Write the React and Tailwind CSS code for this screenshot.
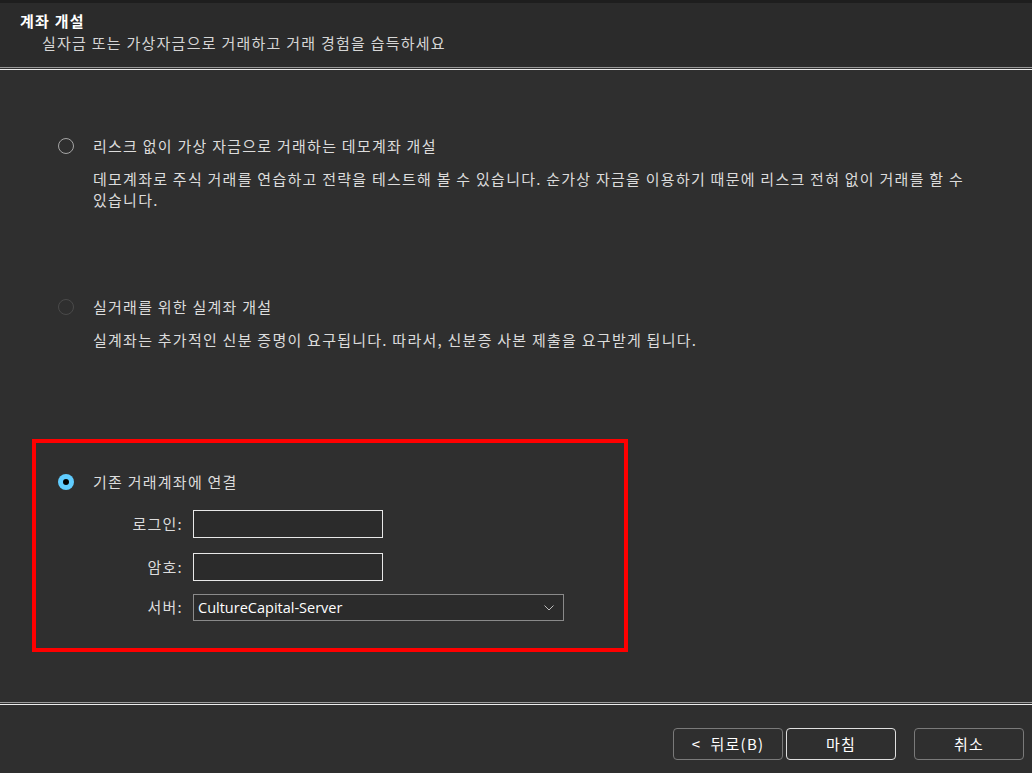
import React from "react";

const font = { fontFamily: '"Noto Sans CJK KR", "Noto Sans", sans-serif' };

function Radio({ state }) {
  if (state === "checked") {
    return (
      <div className="w-4 h-4 rounded-full bg-[#60cdff] flex items-center justify-center shrink-0">
        <div className="w-[6px] h-[6px] rounded-full bg-black" />
      </div>
    );
  }
  if (state === "disabled") {
    return <div className="w-4 h-4 rounded-full border border-[#4a4a4a] shrink-0" />;
  }
  return <div className="w-4 h-4 rounded-full border-[1.5px] border-[#a5a5a5] shrink-0" />;
}

function Separator() {
  return (
    <div className="flex flex-col">
      <div className="h-px bg-[#9a9a9a]" />
      <div className="h-px bg-transparent" />
      <div className="h-px bg-[#ededed]" />
    </div>
  );
}

export default function App() {
  return (
    <div
      className="w-[1032px] h-[773px] bg-[#2f2f2f] flex flex-col text-[15px] tracking-[1.25px] text-[#dcdcdc] overflow-hidden"
      style={font}
    >
      <div className="h-[3px] bg-[#1e1e1e]" />
      <div className="h-[64px] bg-[#2b2b2b] pl-5 pt-[8px]">
        <div className="font-bold text-white leading-5">계좌 개설</div>
        <div className="pl-[22px] leading-5 mt-[2px] text-[#d6d6d6]">
          실자금 또는 가상자금으로 거래하고 거래 경험을 습득하세요
        </div>
      </div>
      <Separator />

      <div className="flex-1 flex flex-col pt-[66px]">
        <div className="pl-[58px]">
          <div className="flex items-center h-5 gap-[19px]">
            <Radio state="unchecked" />
            <span>리스크 없이 가상 자금으로 거래하는 데모계좌 개설</span>
          </div>
          <div className="pl-[35px] mt-3 leading-[21px] w-[940px]">
            데모계좌로 주식 거래를 연습하고 전략을 테스트해 볼 수 있습니다. 순가상 자금을 이용하기 때문에 리스크 전혀 없이 거래를 할 수
            <br />
            있습니다.
          </div>
        </div>

        <div className="pl-[58px] mt-[87px]">
          <div className="flex items-center h-5 gap-[19px]">
            <Radio state="disabled" />
            <span>실거래를 위한 실계좌 개설</span>
          </div>
          <div className="pl-[35px] mt-3 leading-[21px]">
            실계좌는 추가적인 신분 증명이 요구됩니다. 따라서, 신분증 사본 제출을 요구받게 됩니다.
          </div>
        </div>

        <div className="ml-8 mt-[89px] w-[596px] h-[213px] border-4 border-[#ff0000] pl-[22px] pt-[29px]">
          <div className="flex items-center h-5 gap-[19px]">
            <Radio state="checked" />
            <span>기존 거래계좌에 연결</span>
          </div>
          <div className="flex flex-col mt-[18px]">
            <div className="flex items-center">
              <div className="w-[125px] text-right">로그인:</div>
              <div className="ml-[10px] w-[190px] h-[28px] border-[1.5px] border-[#e8e8e8] bg-[#2b2b2b]" />
            </div>
            <div className="flex items-center mt-[15px]">
              <div className="w-[125px] text-right">암호:</div>
              <div className="ml-[10px] w-[190px] h-[28px] border-[1.5px] border-[#e8e8e8] bg-[#2b2b2b]" />
            </div>
            <div className="flex items-center mt-[13px]">
              <div className="w-[125px] text-right">서버:</div>
              <div className="ml-[10px] w-[371px] h-[27px] border border-[#8a8a8a] bg-[#2b2b2b] flex items-center justify-between pl-1 pr-[9px]">
                <span
                  className="text-[14.5px] tracking-normal text-white"
                  style={{ fontFamily: '"Open Sans", "Noto Sans", sans-serif' }}
                >
                  CultureCapital-Server
                </span>
                <svg width="10" height="6" viewBox="0 0 10 6" fill="none">
                  <path d="M0.5 0.5 L5 5 L9.5 0.5" stroke="#bdbdbd" strokeWidth="1" />
                </svg>
              </div>
            </div>
          </div>
        </div>
      </div>

      <Separator />
      <div className="h-[68px] flex justify-end items-start pt-[23px] pr-2">
        <button className="w-[110px] h-[32px] rounded-[4px] border border-[#7a7a7a] bg-[#2f2f2f] text-white">
          &lt;&nbsp;&nbsp;뒤로(B)
        </button>
        <button className="ml-[3px] w-[110px] h-[32px] rounded-[4px] border border-[#e0e0e0] bg-[#2f2f2f] text-white">
          마침
        </button>
        <button className="ml-[18px] w-[110px] h-[32px] rounded-[4px] border border-[#7a7a7a] bg-[#2f2f2f] text-white">
          취소
        </button>
      </div>
    </div>
  );
}
